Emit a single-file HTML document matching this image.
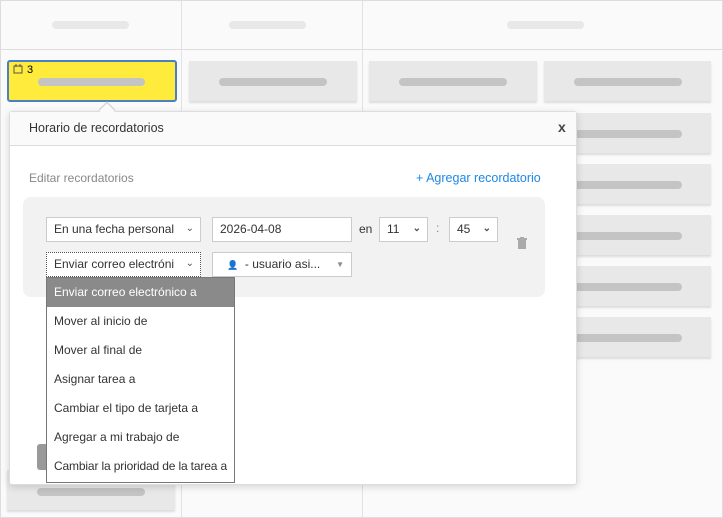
<!DOCTYPE html><html><head><style>
*{box-sizing:border-box;margin:0;padding:0}
body{width:723px;height:518px;overflow:hidden;background:#fff;font-family:"Liberation Sans",sans-serif;font-size:12px;color:#333;position:relative}
.a{position:absolute}
.card{position:absolute;background:#e8e8e8;box-shadow:0 2px 2px rgba(0,0,0,.12)}
.hb{position:absolute;height:8px;border-radius:4px;background:#e8e8e8;top:21px}
.b2{position:absolute;height:8px;border-radius:4px;background:#c4c4c4}
.in{position:absolute;background:#fff;border:1px solid #ccc;height:25px;line-height:23px;padding-left:7px;font-size:12px;color:#333;white-space:nowrap;overflow:hidden}
.chev{position:absolute;right:6px;top:-1px;font-size:10px;color:#555}
.it{height:29px;line-height:29px;padding-left:7px;font-size:12px;color:#333;white-space:nowrap}
</style></head><body>
<div class="a" style="left:0;top:0;width:723px;height:518px;border:1px solid #ddd;background:#fafafa"></div>
<div class="a" style="left:1px;top:49px;width:721px;height:1px;background:#ddd"></div>
<div class="a" style="left:181px;top:1px;width:1px;height:516px;background:#e2e2e2"></div>
<div class="a" style="left:362px;top:1px;width:1px;height:516px;background:#e2e2e2"></div>
<div class="hb" style="left:52px;width:77px"></div>
<div class="hb" style="left:229px;width:77px"></div>
<div class="hb" style="left:507px;width:77px"></div>
<div class="a" style="left:7px;top:60px;width:170px;height:42px;background:#ffeb3b;border:2px solid #4a7fc1;border-radius:3px"></div>
<svg class="a" style="left:13px;top:64px" width="10" height="10" viewBox="0 0 10 10"><rect x="1" y="2" width="8" height="7" fill="none" stroke="#555"/><path d="M3 0v3M7 0v3" stroke="#555"/></svg>
<div class="a" style="left:27px;top:64px;font-size:11px;color:#000">3</div>
<div class="card" style="left:189px;top:61px;width:168px;height:40px"></div>
<div class="card" style="left:369px;top:61px;width:168px;height:40px"></div>
<div class="card" style="left:544px;top:61px;width:167px;height:40px"></div>
<div class="card" style="left:544px;top:113px;width:167px;height:40px"></div>
<div class="card" style="left:544px;top:164px;width:167px;height:40px"></div>
<div class="card" style="left:544px;top:215px;width:167px;height:40px"></div>
<div class="card" style="left:544px;top:266px;width:167px;height:40px"></div>
<div class="card" style="left:544px;top:317px;width:167px;height:40px"></div>
<div class="card" style="left:7px;top:470px;width:168px;height:40px"></div>
<div class="b2" style="left:38px;top:78px;width:107px"></div>
<div class="b2" style="left:219px;top:78px;width:108px"></div>
<div class="b2" style="left:399px;top:78px;width:108px"></div>
<div class="b2" style="left:574px;top:78px;width:108px"></div>
<div class="b2" style="left:574px;top:130px;width:108px"></div>
<div class="b2" style="left:574px;top:181px;width:108px"></div>
<div class="b2" style="left:574px;top:232px;width:108px"></div>
<div class="b2" style="left:574px;top:283px;width:108px"></div>
<div class="b2" style="left:574px;top:334px;width:108px"></div>
<div class="b2" style="left:37px;top:488px;width:108px"></div>
<div class="a" style="left:9px;top:111px;width:568px;height:374px;background:#fff;border:1px solid #ddd;border-radius:3px;box-shadow:0 2px 8px rgba(0,0,0,.15)"></div>
<div class="a" style="left:101px;top:104px;width:12px;height:12px;background:#fafafa;border-left:1px solid #ccc;border-top:1px solid #ccc;transform:rotate(45deg)"></div>
<div class="a" style="left:10px;top:112px;width:566px;height:34px;background:#fafafa;border-bottom:1px solid #ddd"></div>
<div class="a" style="left:29px;top:121px;font-size:12.5px;color:#333">Horario de recordatorios</div>
<div class="a" style="left:558px;top:119px;font-size:14px;font-weight:bold;color:#444">x</div>
<div class="a" style="left:29px;top:171px;font-size:12px;color:#888">Editar recordatorios</div>
<div class="a" style="left:416px;top:171px;font-size:12.5px;color:#1e88e5">+ Agregar recordatorio</div>
<div class="a" style="left:23px;top:197px;width:522px;height:100px;background:#f2f2f2;border-radius:8px"></div>
<div class="in" style="left:46px;top:217px;width:155px">En una fecha personal<span class="chev">&#8964;</span></div>
<div class="in" style="left:212px;top:217px;width:140px">2026-04-08</div>
<div class="a" style="left:359px;top:222px">en</div>
<div class="in" style="left:379px;top:217px;width:49px">11<span class="chev" style="font-weight:bold">&#8964;</span></div>
<div class="a" style="left:436px;top:221px;color:#888">:</div>
<div class="in" style="left:449px;top:217px;width:49px">45<span class="chev" style="font-weight:bold">&#8964;</span></div>
<svg class="a" style="left:517px;top:237px" width="10" height="12" viewBox="0 0 10 12"><rect x="0" y="1" width="10" height="2" fill="#aaa"/><rect x="3" y="0" width="4" height="2" fill="#aaa"/><rect x="1" y="3" width="8" height="9" fill="#aaa"/></svg>
<div class="in" style="left:46px;top:252px;width:155px;border:1px dotted #555">Enviar correo electróni<span class="chev" style="background:#fff;padding-left:2px">&#8964;</span></div>
<div class="in" style="left:212px;top:252px;width:140px;padding-left:14px"><span style="font-size:9px">&#128100;</span>&nbsp; - usuario asi...<span class="chev" style="right:7px;top:0;font-size:8px;color:#888">&#9660;</span></div>
<div class="a" style="left:37px;top:444px;width:12px;height:26px;background:#999;border-radius:3px 0 0 3px"></div>
<div class="a" style="left:46px;top:277px;width:189px;height:206px;background:#fff;border:1px solid #777;overflow:hidden">
<div class="it" style="background:#8a8a8a;color:#fff">Enviar correo electrónico a</div>
<div class="it">Mover al inicio de</div><div class="it">Mover al final de</div><div class="it">Asignar tarea a</div><div class="it">Cambiar el tipo de tarjeta a</div><div class="it">Agregar a mi trabajo de</div><div class="it" style="letter-spacing:-0.15px">Cambiar la prioridad de la tarea a</div>
</div>
</body></html>
